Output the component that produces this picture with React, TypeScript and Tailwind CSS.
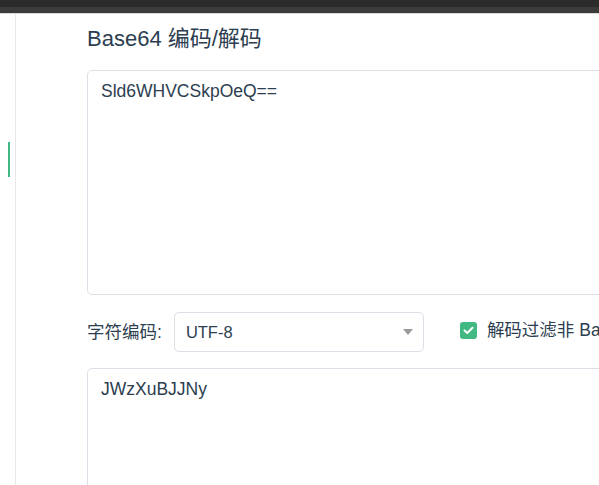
const font = { fontFamily: '"Liberation Sans", "Noto Sans CJK SC", Arial, sans-serif' };

function Sidebar() {
  return (
    <div className="w-[16px] shrink-0 border-r border-[#e8e8e8] pt-[128px]">
      <div className="ml-2 h-[35px] w-[2px] bg-[#42b983]" />
    </div>
  );
}

function Box({ value, height }: { value: string; height: string }) {
  return (
    <textarea
      readOnly
      defaultValue={value}
      className={`block w-[560px] ${height} resize-none rounded-[5px] border border-[#dcdfe6] bg-white px-[13px] pt-[7px] text-[17.5px] leading-[1.5] text-[#2c3e50] outline-none`}
      style={font}
    />
  );
}

export default function App() {
  return (
    <div className="flex h-screen w-screen flex-col overflow-hidden bg-white" style={font}>
      {/* top bar */}
      <div className="shrink-0">
        <div className="h-[7px] bg-[#2b2b2b]" />
        <div className="h-[6px] bg-[#3b3b3b]" />
        <div className="h-px bg-[#d9d9d9]" />
      </div>

      <div className="flex flex-1">
        <Sidebar />

        <main className="flex-1 pl-[71px]">
          <h1 className="mt-2 text-[22px] leading-[33px] font-normal text-[#2c3e50]">Base64 编码/解码</h1>

          <div className="mt-[15px]">
            <Box value="Sld6WHVCSkpOeQ==" height="h-[225px]" />
          </div>

          <div className="mt-[17px] flex items-center whitespace-nowrap">
            <span className="text-[17.5px] text-[#2c3e50]">字符编码:</span>
            <div className="ml-[12px] flex h-[40px] w-[250px] items-center justify-between rounded-[5px] border border-[#dcdfe6] pr-[10px] pl-[11px]">
              <span className="text-[16.5px] text-[#2c3e50]">UTF-8</span>
              <svg width="10" height="6" viewBox="0 0 10 6">
                <path d="M0 0 L10 0 L5 6 Z" fill="#999" />
              </svg>
            </div>
            <label className="mb-[4px] ml-[36px] flex items-center gap-[10px]">
              <span className="flex h-[17px] w-[17px] items-center justify-center rounded-[3px] bg-[#42b983]">
                <svg width="11" height="9" viewBox="0 0 11 9">
                  <path d="M1.5 4.5 L4.3 7 L9.5 1.8" fill="none" stroke="#fff" strokeWidth="2" strokeLinecap="round" strokeLinejoin="round" />
                </svg>
              </span>
              <span className="text-[17.5px] text-[#2c3e50]">解码过滤非 Base64 字符</span>
            </label>
          </div>

          <div className="mt-[16px]">
            <Box value="JWzXuBJJNy" height="h-[225px]" />
          </div>
        </main>
      </div>
    </div>
  );
}
